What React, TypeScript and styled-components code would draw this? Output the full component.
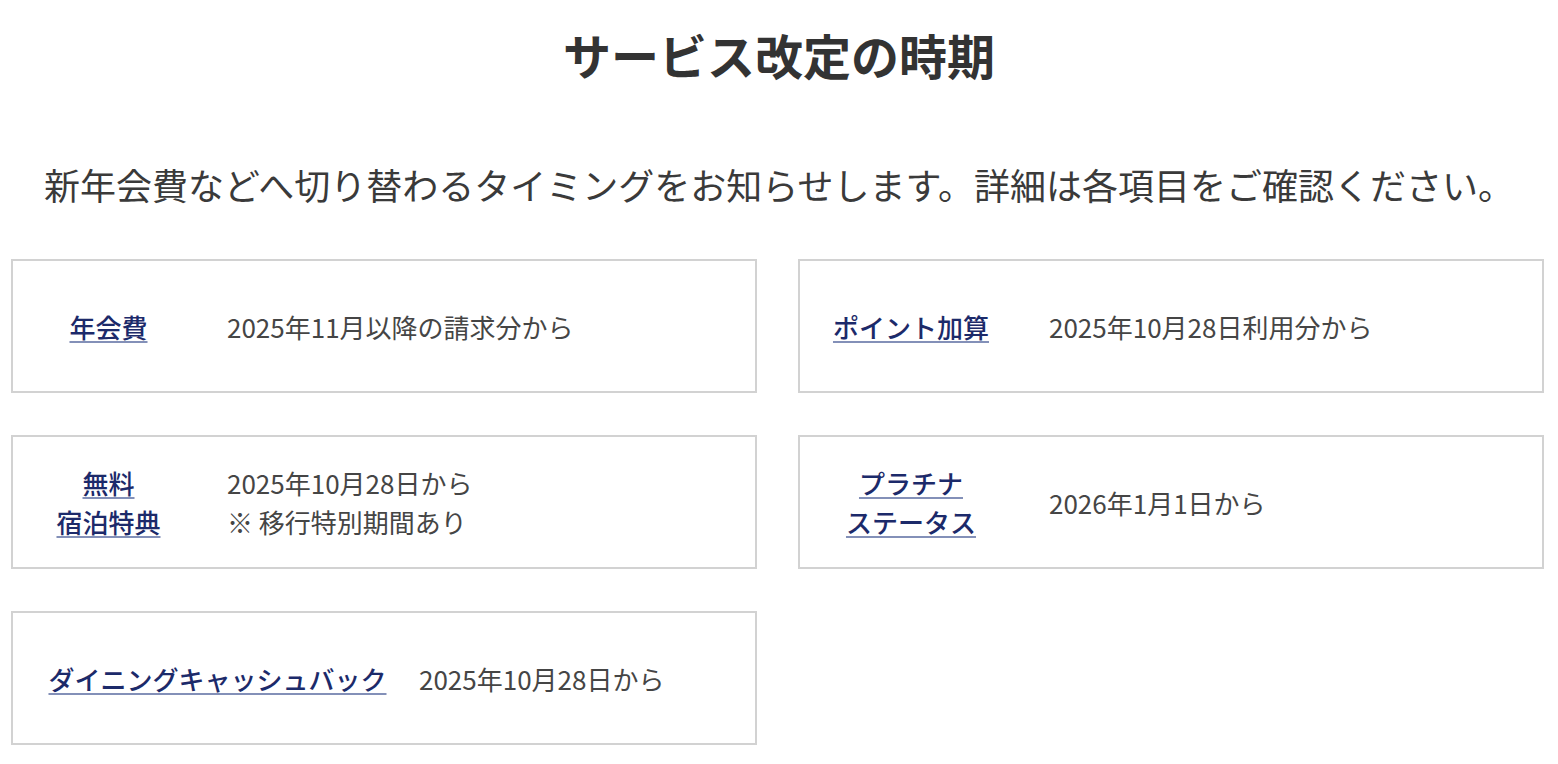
import React from "react";
import styled, { createGlobalStyle } from "styled-components";

const GlobalStyle = createGlobalStyle`
  html, body {
    margin: 0;
    padding: 0;
    background: #ffffff;
  }
  body {
    font-family: "Noto Sans CJK JP", "Noto Sans", sans-serif;
    color: #333333;
  }
`;

const Page = styled.main`
  width: 1558px;
  display: flex;
  flex-direction: column;
`;

const Title = styled.h2`
  margin: 21px 0 0;
  text-align: center;
  font-size: 48px;
  line-height: 66px;
  font-weight: 700;
  color: #333333;
`;

const Intro = styled.p`
  margin: 71px 0 0;
  text-align: center;
  font-size: 36px;
  line-height: 52px;
  font-weight: 400;
  color: #3a3a3a;
`;

const Grid = styled.div`
  margin-top: 49px;
  padding-left: 11px;
  display: grid;
  grid-template-columns: 746px 746px;
  column-gap: 41px;
  row-gap: 42px;
`;

const Card = styled.div`
  box-sizing: border-box;
  height: 134px;
  border: 2px solid #d2d2d2;
  display: flex;
  align-items: center;
  padding-left: 28px;
`;

const Label = styled.a<{ $width: number; $gap: number }>`
  flex: 0 0 ${(p) => p.$width}px;
  margin-right: ${(p) => p.$gap}px;
  text-align: center;
  font-size: 26px;
  line-height: 39px;
  font-weight: 500;
  color: #1c2a6a;
  text-decoration: underline;
  text-decoration-color: #8390b8;
  text-decoration-thickness: 2px;
  text-underline-offset: 3px;
  cursor: pointer;
`;

const Value = styled.div`
  font-size: 26px;
  line-height: 39px;
  font-weight: 400;
  color: #454545;
`;

type Item = {
  label: string[];
  value: string[];
  width: number;
  gap: number;
};

const items: Item[] = [
  { label: ["年会費"], value: ["2025年11月以降の請求分から"], width: 135, gap: 51 },
  { label: ["ポイント加算"], value: ["2025年10月28日利用分から"], width: 166, gap: 55 },
  { label: ["無料", "宿泊特典"], value: ["2025年10月28日から", "※ 移行特別期間あり"], width: 135, gap: 51 },
  { label: ["プラチナ", "ステータス"], value: ["2026年1月1日から"], width: 166, gap: 55 },
  { label: ["ダイニングキャッシュバック"], value: ["2025年10月28日から"], width: 353, gap: 25 },
];

const Lines: React.FC<{ lines: string[] }> = ({ lines }) => (
  <>
    {lines.map((l, i) => (
      <React.Fragment key={i}>
        {i > 0 && <br />}
        {l}
      </React.Fragment>
    ))}
  </>
);

export default function App() {
  return (
    <>
      <GlobalStyle />
      <Page>
        <Title>サービス改定の時期</Title>
        <Intro>新年会費などへ切り替わるタイミングをお知らせします。詳細は各項目をご確認ください。</Intro>
        <Grid>
          {items.map((it, i) => (
            <Card key={i}>
              <Label $width={it.width} $gap={it.gap}>
                <Lines lines={it.label} />
              </Label>
              <Value>
                <Lines lines={it.value} />
              </Value>
            </Card>
          ))}
        </Grid>
      </Page>
    </>
  );
}
